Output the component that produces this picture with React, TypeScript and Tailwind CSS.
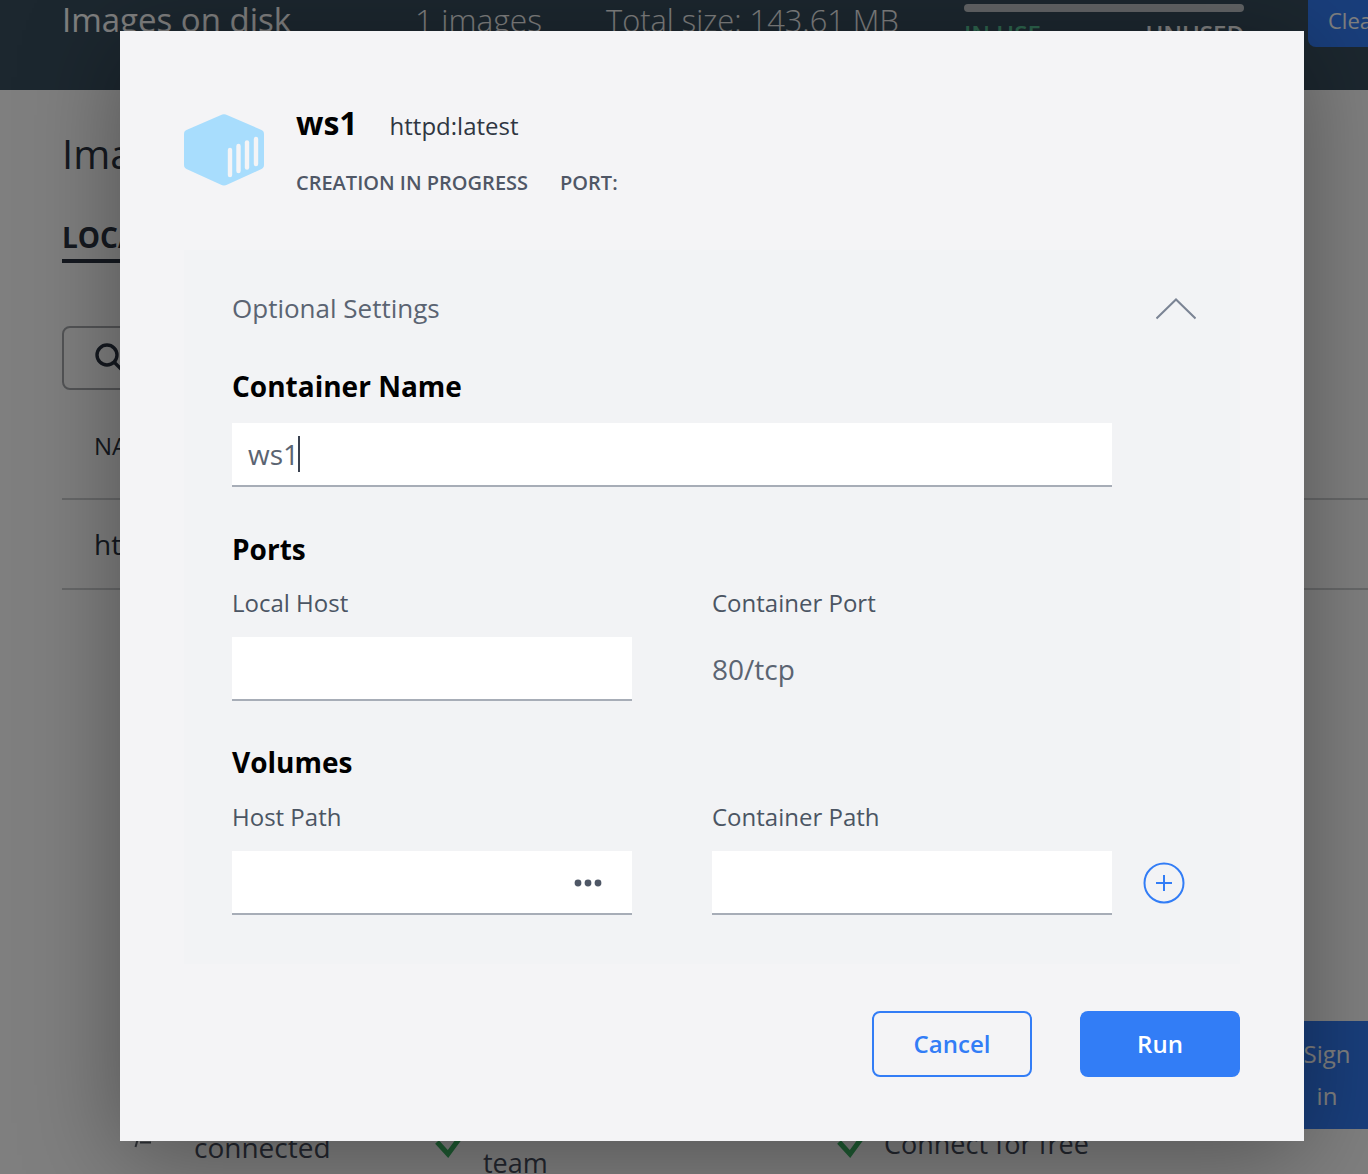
import React from "react";

const labelBold = "text-[28px] leading-[38px] font-bold text-black";
const labelSoft = "text-[24px] leading-[34px] text-[#4b5563]";
const field = "h-16 bg-white border-b-2 border-[#a7adb7]";

function Cube() {
  return (
    <svg width="80" height="72" viewBox="0 0 80 72" className="block">
      <path
        d="M36.5 1.2a8 8 0 0 1 7 0L77 15.8a4.5 4.5 0 0 1 3 4.2v31a4.5 4.5 0 0 1-3 4.2L43.5 70.6a8 8 0 0 1-7 0L3 55.2A4.5 4.5 0 0 1 0 51V20a4.5 4.5 0 0 1 3-4.2z"
        fill="#a8ddfd"
      />
      <g stroke="#f4f4f6" strokeWidth="4.4" strokeLinecap="round">
        <line x1="46" y1="36" x2="46" y2="61" />
        <line x1="54.5" y1="32" x2="54.5" y2="57" />
        <line x1="63" y1="28.5" x2="63" y2="53.5" />
        <line x1="72" y1="25" x2="72" y2="50" />
      </g>
    </svg>
  );
}

function Background() {
  return (
    <div className="h-[1174px] flex flex-col bg-white overflow-hidden">
      <header className="h-[90px] shrink-0 bg-[#394f5f] flex items-start pl-[62px] text-white overflow-hidden">
        <span className="w-[353px] shrink-0 text-[33px] leading-[40px]">Images on disk</span>
        <span className="w-[191px] shrink-0 text-[31.7px] leading-[40px] font-light">1 images</span>
        <span className="w-[358px] shrink-0 text-[30.8px] leading-[40px] font-light">Total size: 143.61 MB</span>
        <div className="w-[280px] shrink-0 pt-1">
          <div className="h-2 rounded bg-[#c4c9cd]" />
          <div className="flex justify-between text-[24px] leading-[28px] font-semibold mt-2">
            <span className="text-[#5bc99a]">IN USE</span>
            <span className="text-white">UNUSED</span>
          </div>
        </div>
        <div className="ml-16 w-[80px] h-[47px] shrink-0 rounded-bl-lg bg-[#327df6] pl-5 pt-[4px] text-[22px] leading-[32px] overflow-hidden">Clear</div>
      </header>
      <main className="flex-1 pl-[62px] text-[#2a3340]">
        <h1 className="mt-[37px] text-[40px] leading-[54px]">Images</h1>
        <div className="mt-[40px] w-[200px] border-b-4 border-[#2a3340] pb-[6px] text-[28px] leading-[32px] font-bold">LOCAL</div>
        <div className="mt-[63px] h-16 w-[400px] border-2 border-[#a6a9ad] rounded-lg flex items-center pl-[30px]">
          <svg width="32" height="32" viewBox="0 0 32 32" fill="none" stroke="#2a3340" strokeWidth="3.4"><circle cx="13" cy="13" r="10" /><line x1="20" y1="20" x2="30" y2="30" /></svg>
        </div>
        <div className="mt-[24px] h-[86px] border-b-2 border-[#cfd1d3] pl-8 pt-[16px] text-[24px] leading-[32px]">NAME</div>
        <div className="h-[90px] border-b-2 border-[#cfd1d3] pl-8 pt-[25px] text-[28px] leading-[38px]">httpd</div>
      </main>
      <div className="h-[108px] flex justify-end shrink-0 -mt-[53px] mb-[45px]">
        <div className="w-[82px] bg-[#327df6] text-white text-[24px] leading-[42px] text-center pt-3">Sign<br />in</div>
      </div>
    </div>
  );
}

export default function App() {
  return (
    <div className="relative w-[1368px] h-[1174px] overflow-hidden" style={{ fontFamily: '"Open Sans", sans-serif' }}>
      <Background />
      <div className="absolute inset-0 bg-black/50" />
      <div className="absolute left-[194px] top-[1127px] text-[28px] leading-[40px] text-[#23262e]">connected</div>
      <div className="absolute left-[483px] top-[1143px] text-[27px] leading-[40px] text-[#23262e]">team</div>
      <div className="absolute left-[884px] top-[1124px] text-[27px] leading-[40px] text-[#23262e]">Connect for free</div>
      <svg className="absolute left-[134px] top-[1138px]" width="18" height="10" viewBox="0 0 18 10" fill="none" stroke="#2f3237" strokeWidth="2"><path d="M3.5 2L1.5 9M6 4.5h11" /></svg>
      <svg className="absolute left-[434px] top-[1130px]" width="28" height="28" viewBox="0 0 28 28" fill="none" stroke="#1e5a32" strokeWidth="5"><path d="M3 12l11 12L25 9" /></svg>
      <svg className="absolute left-[836px] top-[1130px]" width="28" height="28" viewBox="0 0 28 28" fill="none" stroke="#1e5a32" strokeWidth="5"><path d="M3 12l11 12L25 9" /></svg>
      <div
        role="dialog"
        className="absolute left-[120px] top-[31px] w-[1184px] h-[1110px] bg-[#f4f4f6] px-16 shadow-[0_14px_90px_rgba(0,0,0,0.35)]"
      >
        <div className="flex pt-[83px] h-[219px]">
          <Cube />
          <div className="ml-8">
            <div className="flex items-baseline h-[38px] -mt-[10px]">
              <span className="text-[32px] leading-[38px] font-bold text-black">ws1</span>
              <span className="ml-[32px] text-[24px] leading-[34px] text-[#2f3642]">httpd:latest</span>
            </div>
            <div className="flex mt-[27px] text-[20px] leading-[28px] font-semibold text-[#4f5766]">
              <span>CREATION IN PROGRESS</span>
              <span className="ml-8">PORT:</span>
            </div>
          </div>
        </div>

        <section className="h-[714px] bg-[#f2f3f5] pl-12 pr-11 pt-[40px]">
          <div className="flex items-center justify-between h-9">
            <span className="text-[26px] leading-9 text-[#5b6472]">Optional Settings</span>
            <svg className="mt-[2px]" width="40" height="22" viewBox="0 0 40 22" fill="none" stroke="#7b8494" strokeWidth="2"><path d="M0.5 20.5L20 1.5l19.5 19" /></svg>
          </div>
          <div className={`${labelBold} mt-[41px]`}>Container Name</div>
          <div className={`${field} w-[880px] mt-[18px] flex items-center pl-4 text-[28px] text-[#5b6472]`}>
            ws1<span className="-ml-px w-[2px] h-9 bg-[#3a4250]" />
          </div>

          <div className={`${labelBold} mt-[43px]`}>Ports</div>
          <div className="flex mt-[18px]">
            <div className="w-[400px]">
              <div className={labelSoft}>Local Host</div>
              <div className={`${field} mt-[17px]`} />
            </div>
            <div className="ml-20">
              <div className={labelSoft}>Container Port</div>
              <div className="mt-[33px] text-[28px] leading-[32px] text-[#5b6472]">80/tcp</div>
            </div>
          </div>

          <div className={`${labelBold} mt-[42px]`}>Volumes</div>
          <div className="flex mt-[19px]">
            <div className="w-[400px]">
              <div className={labelSoft}>Host Path</div>
              <div className={`${field} mt-[17px] flex items-center justify-end pr-[30px]`}>
                <svg className="mt-[2px]" width="28" height="8" viewBox="0 0 28 8" fill="#4f5766"><circle cx="4" cy="4" r="3.4" /><circle cx="14" cy="4" r="3.4" /><circle cx="24" cy="4" r="3.4" /></svg>
              </div>
            </div>
            <div className="ml-20 w-[400px]">
              <div className={labelSoft}>Container Path</div>
              <div className={`${field} mt-[17px]`} />
            </div>
            <svg className="ml-[31px] mt-[62px]" width="42" height="42" viewBox="0 0 42 42" fill="none" stroke="#327df6" strokeWidth="2"><circle cx="21" cy="21" r="19.5" /><path d="M21 13v16M13 21h16" /></svg>
          </div>
        </section>

        <div className="flex justify-end gap-12 mt-[47px]">
          <button className="w-40 h-[66px] rounded-lg border-2 border-[#327df6] text-[#327df6] text-[24px] font-semibold">Cancel</button>
          <button className="w-40 h-[66px] rounded-lg bg-[#327df6] text-white text-[24px] font-semibold">Run</button>
        </div>
      </div>
    </div>
  );
}
